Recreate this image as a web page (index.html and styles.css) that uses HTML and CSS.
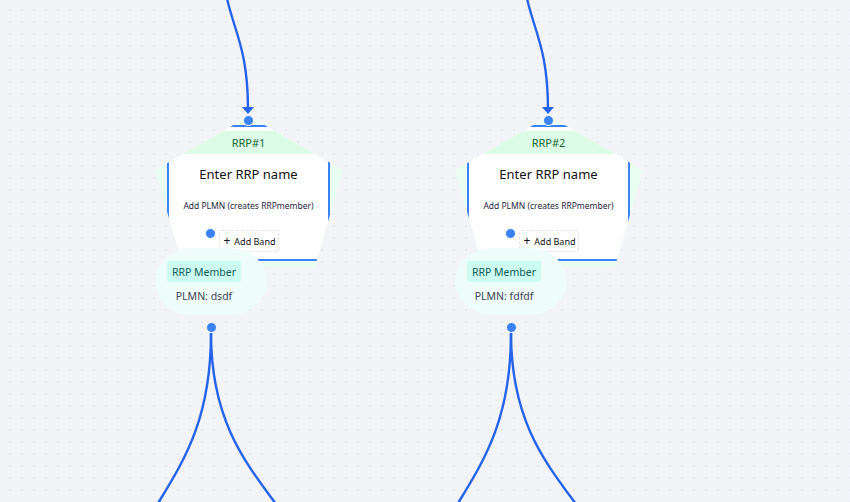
FILE: index.html
```html
<!DOCTYPE html>
<html>
<head>
<meta charset="utf-8">
<link rel="stylesheet" href="styles.css">
</head>
<body>
<div class="canvas">
  <svg class="edges" width="850" height="502" viewBox="0 0 850 502">
    <g class="edge">
      <path d="M221,-60 C221,25 248,25 248,110"/>
      <path d="M521,-60 C521,25 548,25 548,110"/>
      <path d="M211,333 C211,500 109,500 109,667"/>
      <path d="M211,333 C211,500 335,500 335,667"/>
      <path d="M511,333 C511,500 409,500 409,667"/>
      <path d="M511,333 C511,500 635,500 635,667"/>
    </g>
    <polygon class="arrow" points="242,107 254,107 248,114"/>
    <polygon class="arrow" points="542,107 554,107 548,114"/>
  </svg>

  <div class="rrp" style="left:155px; top:116px">
    <div class="rrp-shape">
      <div class="card">
        <div class="card-head">RRP#1</div>
        <div class="card-title">Enter RRP name</div>
        <div class="card-sub">Add PLMN (creates RRPmember)</div>
        <div class="card-foot">
          <span class="handle handle-foot"></span>
          <button class="add-band"><span class="plus">+</span>Add Band</button>
        </div>
      </div>
    </div>
    <span class="handle handle-top"></span>
  </div>

  <div class="member" style="left:155px; top:248px">
    <span class="member-badge">RRP Member</span>
    <span class="member-plmn">PLMN: dsdf</span>
    <span class="handle handle-bottom"></span>
  </div>

  <div class="rrp" style="left:455px; top:116px">
    <div class="rrp-shape">
      <div class="card">
        <div class="card-head">RRP#2</div>
        <div class="card-title">Enter RRP name</div>
        <div class="card-sub">Add PLMN (creates RRPmember)</div>
        <div class="card-foot">
          <span class="handle handle-foot"></span>
          <button class="add-band"><span class="plus">+</span>Add Band</button>
        </div>
      </div>
    </div>
    <span class="handle handle-top"></span>
  </div>

  <div class="member" style="left:455px; top:248px">
    <span class="member-badge">RRP Member</span>
    <span class="member-plmn">PLMN: fdfdf</span>
    <span class="handle handle-bottom"></span>
  </div>
</div>
</body>
</html>
```

FILE: styles.css
```css
* { box-sizing: border-box; }
html, body { margin: 0; padding: 0; }
body {
  font-family: "Noto Sans", "Open Sans", sans-serif;
  background: #f2f4f7;
}
.canvas {
  position: relative;
  width: 850px;
  height: 502px;
  overflow: hidden;
  background-color: #f2f4f7;
  background-image: radial-gradient(circle, #e6e9ed 0.7px, transparent 1px);
  background-size: 12px 12px;
  background-position: 4px 4px;
}
.edges {
  position: absolute;
  left: 0;
  top: 0;
}
.edge path {
  fill: none;
  stroke: #2563eb;
  stroke-width: 2.4;
}
.arrow { fill: #2563eb; }

.rrp {
  position: absolute;
  width: 188px;
  height: 151px;
}
.rrp-shape {
  width: 100%;
  height: 100%;
  background: #eafdf1;
  clip-path: polygon(50% 0, 100% 36%, 85% 100%, 15% 100%, 0 36%);
  padding: 9px 13px 6px 12px;
}
.card {
  height: 136px;
  background: #fff;
  border: 2px solid #3b82f6;
  border-radius: 3px;
  display: flex;
  flex-direction: column;
  align-items: stretch;
  padding-top: 4px;
}
.card-head {
  height: 23px;
  background: #dcfce7;
  color: #166534;
  font-size: 11px;
  display: flex;
  align-items: center;
  justify-content: center;
}
.card-title {
  margin-top: 10px;
  height: 20px;
  line-height: 20px;
  font-size: 13px;
  color: #111;
  text-align: center;
}
.card-sub {
  margin-top: 14px;
  height: 16px;
  line-height: 16px;
  font-size: 8.5px;
  color: #1e2540;
  text-align: center;
  white-space: nowrap;
}
.card-foot {
  position: relative;
  margin-top: 16px;
  height: 22px;
  display: flex;
  justify-content: center;
}
.add-band {
  width: 60px;
  height: 22px;
  border: 1px dashed #e3e5ea;
  border-radius: 2px;
  background: #fff;
  font-family: inherit;
  font-size: 9px;
  color: #111;
  padding: 0 0 0 2px;
  display: flex;
  align-items: center;
  justify-content: center;
  gap: 4px;
}
.plus { font-size: 12px; line-height: 1; margin-top: -1px; }

.handle {
  position: absolute;
  width: 11px;
  height: 11px;
  border-radius: 50%;
  background: #3b82f6;
  border: 1px solid #fff;
}
.handle-top { left: 88px; top: -1px; }
.handle-foot { left: 36px; top: -2px; }
.handle-bottom { left: 50.5px; bottom: -18px; }

.member {
  position: absolute;
  width: 112px;
  height: 67px;
  border-radius: 38px / 34px;
  background: #effdfa;
  display: flex;
  flex-direction: column;
  align-items: center;
  padding: 13px 26px 0 12px;
}
.member-badge {
  width: 74px;
  height: 21px;
  background: #ccfbf1;
  color: #115e59;
  font-size: 10.5px;
  display: flex;
  align-items: center;
  justify-content: center;
  border-radius: 2px;
}
.member-plmn {
  margin-top: 6px;
  font-size: 10.5px;
  line-height: 16px;
  color: #3b4254;
}
```
